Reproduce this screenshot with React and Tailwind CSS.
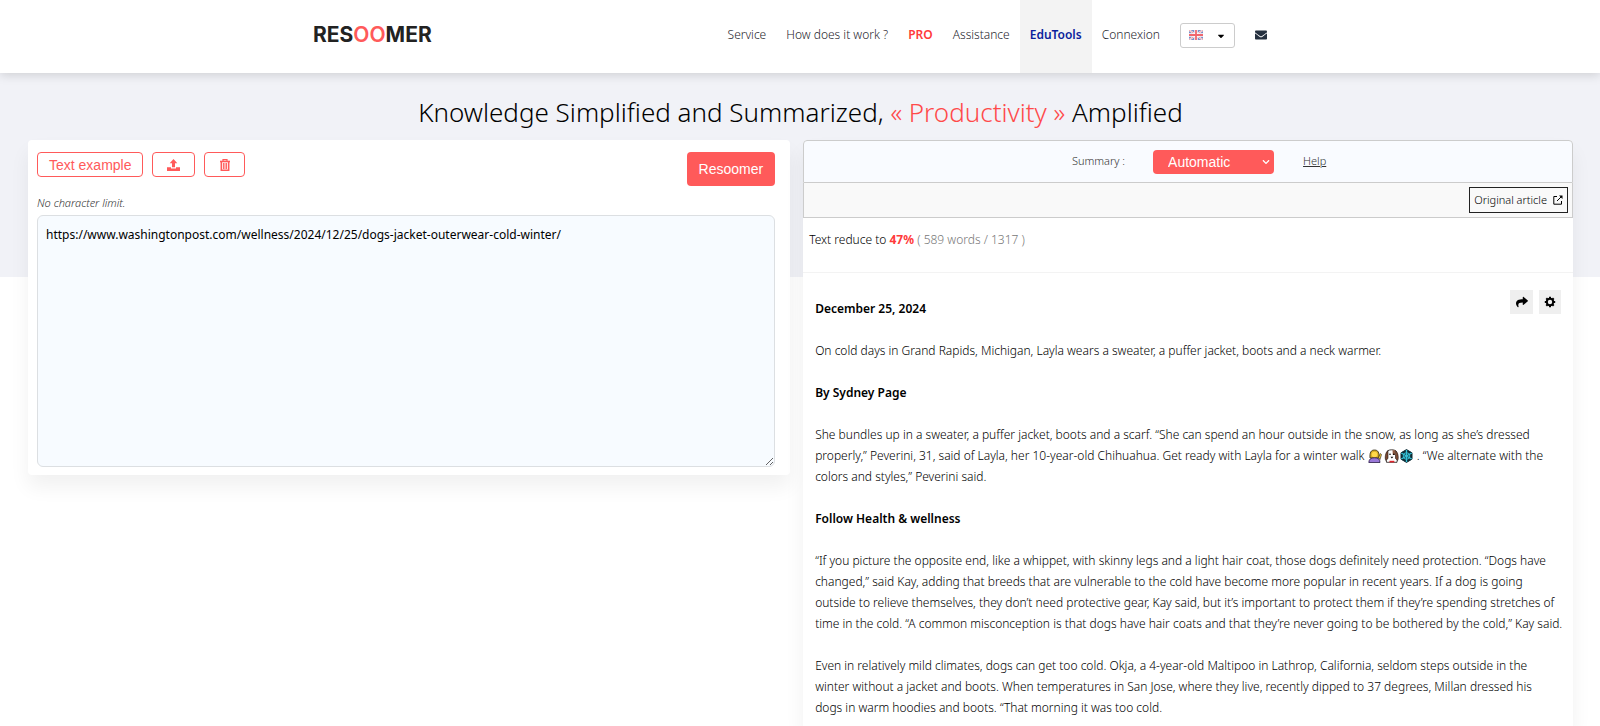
import React from 'react';
import { FaShare, FaEnvelope, FaCaretDown, FaChevronDown } from 'react-icons/fa';

const NAV = [
  { label: 'Service' },
  { label: 'How does it work ?' },
  { label: 'PRO', tone: 'pro' },
  { label: 'Assistance' },
  { label: 'EduTools', tone: 'active' },
  { label: 'Connexion' },
];

const NAV_TONES = {
  pro: 'text-[#ff3b3b] font-semibold',
  active: 'bg-[#f3f3f3] text-[#0b1f9c] font-semibold',
};

const UploadIcon = () => (
  <svg viewBox="0 0 13 12" className="h-3 w-[13px]" fill="currentColor" aria-hidden="true">
    <path d="M6.5 0 10.3 4.2H8V8.2H5V4.2H2.7Z" />
    <path d="M0 8.2H4V9.4H9V8.2H13V12H0Z" />
  </svg>
);

const TrashIcon = () => (
  <svg viewBox="0 0 10 12" className="h-3 w-[10px]" fill="none" stroke="currentColor" aria-hidden="true">
    <path d="M0 2.5H10" strokeWidth="1.6" />
    <path d="M3 2V.7H7V2" strokeWidth="1.2" />
    <path d="M1.300 3V11.200H8.700V3" strokeWidth="1.500" />
    <path d="M3.400 4V10M5 4V10M6.600 4V10" strokeWidth="1" />
  </svg>
);

const CogIcon = () => (
  <svg viewBox="0 0 12 12" className="h-3 w-3" fill="none" stroke="currentColor" aria-hidden="true">
    <circle cx="6" cy="6" r="3.200" strokeWidth="2" />
    <path
      d="M6 .8V2.500M6 9.500V11.200M.8 6H2.500M9.500 6H11.200M2.300 2.300 3.500 3.500M8.500 8.500 9.700 9.700M2.300 9.700 3.500 8.500M8.500 3.500 9.700 2.300"
      strokeWidth="2"
    />
  </svg>
);

const ExternalIcon = () => (
  <svg viewBox="0 0 10 10" className="h-[10px] w-[10px]" fill="none" stroke="currentColor" strokeWidth="1" aria-hidden="true">
    <path d="M4 1.5H.8V9.2H8.5V6" />
    <path d="M4 6 9 1" />
    <path d="M6 .5H9.5V4Z" fill="currentColor" stroke="none" />
  </svg>
);

const Flag = () => (
  <svg viewBox="0 0 14 10" className="mb-[2px] h-[10px] w-[14px]" aria-hidden="true">
    <rect width="14" height="10" fill="#7d8cc4" />
    <path d="M0 0 14 10M14 0 0 10" stroke="#fff" strokeWidth="1.8" />
    <path d="M0 0 14 10M14 0 0 10" stroke="#f08a90" strokeWidth="0.8" />
    <path d="M7 0V10M0 5H14" stroke="#fff" strokeWidth="3.4" />
    <path d="M7 0V10M0 5H14" stroke="#f0666e" strokeWidth="1.8" />
  </svg>
);

const Emojis = () => (
  <svg viewBox="0 0 46 14" className="inline-block h-[14px] w-[46px] align-[-3px]" role="img" aria-label="woman, dog, snowflake">
    <path d="M2 9C1.500 3.500 3 1 6.500 1S11.500 3.500 11 9Z" fill="#d9ad25" stroke="#2b2411" strokeWidth=".8" />
    <circle cx="6.500" cy="5.500" r="2.800" fill="#ffd84a" />
    <path d="M.8 13.500C1 10 3 8.800 6.500 8.800S12 10 12 13.500Z" fill="#9a78d8" stroke="#2a1c46" strokeWidth=".8" />
    <path d="M10.500 8.500 12.300 4.500 13.500 5.500 12 10.500Z" fill="#f0c53a" stroke="#2b2411" strokeWidth=".6" />
    <path d="M18.500 13.300C18 9 18.500 3 20 1.600 22 .5 25.500.5 27.500 1.600 29 3 29.500 9 29 13.300Z" fill="#fff" stroke="#1d1512" strokeWidth=".8" />
    <path d="M20 1.600C17.500 3 16.500 9 17.800 11.500L20 9.500ZM27.500 1.600C30 3 31 9 29.700 11.500L27.500 9.500Z" fill="#7c4a33" stroke="#1d1512" strokeWidth=".6" />
    <path d="M24.500 1.200H27.300V6H24.800Z" fill="#8d5a40" />
    <circle cx="22" cy="5.300" r=".8" />
    <circle cx="25.800" cy="5.300" r=".8" />
    <path d="M22.500 7.800H25.300L23.900 9.500Z" />
    <path d="M21.500 12.600H26.300" stroke="#e0232b" strokeWidth="1.600" />
    <path d="M38.500.6 44 3.800V10.200L38.500 13.400 33 10.200V3.800Z" fill="#0f2c35" stroke="#0f2c35" strokeLinejoin="round" />
    <path d="M38.500 1V13M33.300 4 43.700 10M43.700 4 33.300 10" stroke="#35c3d8" strokeWidth="1.300" />
    <circle cx="38.500" cy="7" r="3.300" fill="none" stroke="#35c3d8" strokeWidth=".9" />
  </svg>
);

const Lines = ({ items }) =>
  items.map((line, i) => (
    <React.Fragment key={i}>
      {i > 0 && <br />}
      {line}
    </React.Fragment>
  ));

const ARTICLE = [
  { title: 'December 25, 2024' },
  { lines: ['On cold days in Grand Rapids, Michigan, Layla wears a sweater, a puffer jacket, boots and a neck warmer.'] },
  { title: 'By Sydney Page' },
  {
    lines: [
      'She bundles up in a sweater, a puffer jacket, boots and a scarf. “She can spend an hour outside in the snow, as long as she’s dressed',
      <>properly,” Peverini, 31, said of Layla, her 10-year-old Chihuahua. Get ready with Layla for a winter walk <Emojis /> . “We alternate with the</>,
      'colors and styles,” Peverini said.',
    ],
  },
  { title: 'Follow Health & wellness' },
  {
    lines: [
      '“If you picture the opposite end, like a whippet, with skinny legs and a light hair coat, those dogs definitely need protection. “Dogs have',
      'changed,” said Kay, adding that breeds that are vulnerable to the cold have become more popular in recent years. If a dog is going',
      'outside to relieve themselves, they don’t need protective gear, Kay said, but it’s important to protect them if they’re spending stretches of',
      'time in the cold. “A common misconception is that dogs have hair coats and that they’re never going to be bothered by the cold,” Kay said.',
    ],
  },
  {
    lines: [
      'Even in relatively mild climates, dogs can get too cold. Okja, a 4-year-old Maltipoo in Lathrop, California, seldom steps outside in the',
      'winter without a jacket and boots. When temperatures in San Jose, where they live, recently dipped to 37 degrees, Millan dressed his',
      'dogs in warm hoodies and boots. “That morning it was too cold.',
    ],
  },
];

const Header = () => (
  <header className="z-10 flex h-[73px] shrink-0 justify-between bg-white pr-[333px] pl-[313px] shadow-[0_2px_10px_rgba(0,0,0,0.15)]">
    <a href="#" className="pt-5 font-[Inter,sans-serif] text-[21px] leading-[30px] font-bold text-[#222]">
      RES<span className="font-semibold text-[#ff5a5a]">OO</span>MER
    </a>
    <nav className="flex text-xs leading-[70px] text-[#555c66]">
      {NAV.map((item) => (
        <a key={item.label} href="#" className={`px-[10px] leading-[70px] whitespace-nowrap ${NAV_TONES[item.tone] || 'font-light text-[#1f262e]'}`}>
          {item.label}
        </a>
      ))}
      <button type="button" aria-label="Language" className="mt-[23px] ml-[10px] flex h-[25px] w-[55px] items-center justify-between rounded-[3px] border border-[#ccc] px-2 text-black">
        <Flag />
        <FaCaretDown size={10} />
      </button>
      <a href="#" aria-label="Contact" className="ml-5 flex h-[70px] items-center text-[#25303f]">
        <FaEnvelope size={12} />
      </a>
    </nav>
  </header>
);

const Editor = () => (
  <section className="self-start rounded bg-white pt-3 pr-[15px] pb-2 pl-[9px] shadow-[0_12px_20px_rgba(0,0,0,0.06)]">
    <div className="flex items-start gap-[9px] font-[Liberation_Sans,Arial,sans-serif] text-[#ff5a5a]">
      <button type="button" className="h-[25px] rounded border border-current px-[11px] text-sm leading-[22px]">Text example</button>
      <button type="button" aria-label="Upload" className="flex h-[25px] w-[43px] items-center justify-center rounded border border-current">
        <UploadIcon />
      </button>
      <button type="button" aria-label="Delete" className="flex h-[25px] w-[41px] items-center justify-center rounded border border-current">
        <TrashIcon />
      </button>
      <button type="button" className="ml-auto h-[34px] rounded bg-[#ff5a5a] px-3 text-sm text-white">Resoomer</button>
    </div>
    <label htmlFor="source" className="mt-2 block text-[11px] leading-[18px] font-light text-[#333] italic">No character limit.</label>
    <textarea
      id="source"
      className="mt-[3px] block h-[252px] w-full rounded-md border border-[#dcdfe2] bg-[#f7fbff] px-2 py-[9px] text-xs leading-5 text-black"
      defaultValue="https://www.washingtonpost.com/wellness/2024/12/25/dogs-jacket-outerwear-cold-winter/"
    />
  </section>
);

const Result = () => (
  <section className="flex flex-col rounded-t bg-white shadow-[0_12px_20px_rgba(0,0,0,0.06)]">
    <div className="flex h-[43px] items-center justify-center rounded-t border border-[#ccc] bg-[#f9fbff] pl-[22px] text-[11px] font-light text-[#333]">
      <label htmlFor="mode">Summary :</label>
      <div className="relative mr-[29px] ml-7">
        <select id="mode" className="h-6 w-[121px] appearance-none rounded bg-[#ff5a5a] px-[15px] font-[Liberation_Sans,Arial,sans-serif] text-sm font-normal text-white">
          <option>Automatic</option>
          <option>Manual</option>
        </select>
        <FaChevronDown size={8} className="pointer-events-none absolute top-2 right-1 text-white" />
      </div>
      <a href="#" className="underline">Help</a>
    </div>
    <div className="flex h-[35px] items-center justify-end border-x border-b border-[#ccc] bg-[#f9f9f9] pr-1">
      <a href="#" className="flex h-[26px] items-center gap-[6px] border border-[#222] px-1 text-[11px] font-light whitespace-nowrap text-black">
        Original article <ExternalIcon />
      </a>
    </div>
    <p className="border-b border-[#f3f3f3] pt-3 pb-[22px] pl-[6px] text-xs leading-5 font-light text-black">
      Text reduce to <b className="font-bold text-[#ff3b3b]">47%</b> <span className="text-[#777]">( 589 words / 1317 )</span>
    </p>
    <div className="relative flex flex-col gap-[21px] pt-[25px] pr-2 pb-2 pl-3 text-xs leading-[21px] font-light text-black">
      <div className="absolute top-[17px] right-3 flex gap-[6px]">
        <button type="button" aria-label="Share" className="flex h-6 w-[23px] items-center justify-center bg-[#efefef]">
          <FaShare size={12} />
        </button>
        <button type="button" aria-label="Settings" className="flex h-6 w-[22px] items-center justify-center bg-[#efefef]">
          <CogIcon />
        </button>
      </div>
      {ARTICLE.map((block, i) =>
        block.title ? (
          <h2 key={i} className="font-semibold">{block.title}</h2>
        ) : (
          <p key={i}><Lines items={block.lines} /></p>
        )
      )}
    </div>
  </section>
);

export default function App() {
  return (
    <div className="flex min-h-screen flex-col bg-white font-[Noto_Sans,sans-serif]">
      <Header />
      <main className="flex flex-1 flex-col bg-[linear-gradient(#f1f2f7_204px,#fff_204px)] pr-[27px] pl-7">
        <h1 className="pt-[19px] pb-2 text-center text-[26px] leading-10 font-light text-black">
          Knowledge Simplified and Summarized, <span className="text-[#ff4a4a]">« Productivity »</span> Amplified
        </h1>
        <div className="grid flex-1 grid-cols-[99fr_100fr] gap-[13px]">
          <Editor />
          <Result />
        </div>
      </main>
    </div>
  );
}
